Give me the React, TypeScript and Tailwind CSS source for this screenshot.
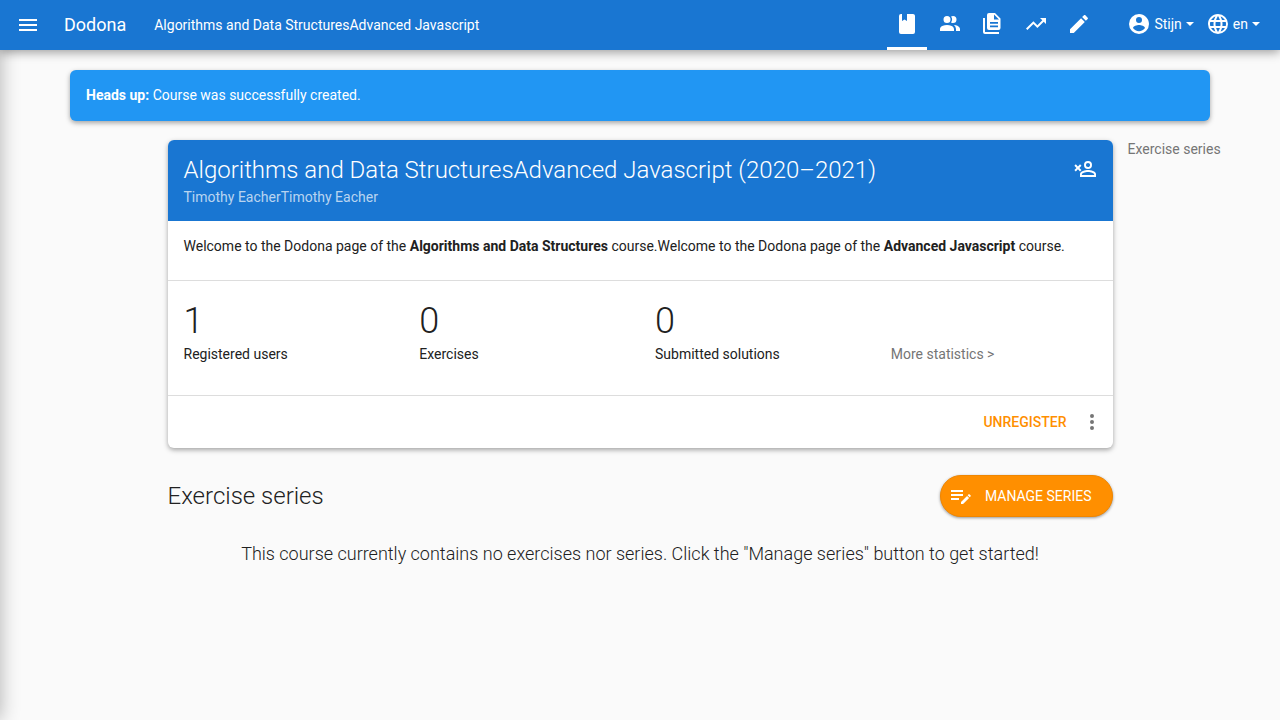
import React from "react";

function Icon({ d, className = "" }: { d: string; className?: string }) {
  return (
    <svg viewBox="0 0 24 24" aria-hidden="true" className={`size-6 shrink-0 fill-current ${className}`}>
      <path d={d} />
    </svg>
  );
}

const icons = {
  menu: "M3,6H21V8H3V6M3,11H21V13H3V11M3,16H21V18H3V16Z",
  book: "M18,22A2,2 0 0,0 20,20V4C20,2.89 19.1,2 18,2H12V9L9.5,7.5L7,9V2H6A2,2 0 0,0 4,4V20A2,2 0 0,0 6,22H18Z",
  users: "M16 17V19H2V17S2 13 9 13 16 17 16 17M12.5 7.5A3.5 3.5 0 1 0 9 11A3.5 3.5 0 0 0 12.5 7.5M15.94 13A5.32 5.32 0 0 1 18 17V19H22V17S22 13.37 15.94 13M15 4A3.39 3.39 0 0 0 13.07 4.59A5 5 0 0 1 13.07 10.41A3.39 3.39 0 0 0 15 11A3.5 3.5 0 0 0 15 4Z",
  documents: "M2,6V20A2,2 0 0,0 4,22H18V20H4V6H2M8,1A2,2 0 0,0 6,3V16A2,2 0 0,0 8,18H17.5A2,2 0 0,0 19.5,16V6.5L14,1H8M13,2.5L18,7.5H13V2.5M9,10V11.7H17V10H9M9,13.6V15.3H17V13.6H9Z",
  trend: "M16,6L18.29,8.29L13.41,13.17L9.41,9.17L2,16.59L3.41,18L9.41,12L13.41,16L19.71,9.71L22,12V6H16Z",
  pencil: "M20.71,7.04C21.1,6.65 21.1,6 20.71,5.63L18.37,3.29C18,2.9 17.35,2.9 16.96,3.29L15.12,5.12L18.87,8.87M3,17.25V21H6.75L17.81,9.93L14.06,6.18L3,17.25Z",
  account: "M12,19.2C9.5,19.2 7.29,17.92 6,16C6.03,14 10,12.9 12,12.9C14,12.9 17.97,14 18,16C16.71,17.92 14.5,19.2 12,19.2M12,5A3,3 0 0,1 15,8A3,3 0 0,1 12,11A3,3 0 0,1 9,8A3,3 0 0,1 12,5M12,2A10,10 0 0,0 2,12A10,10 0 0,0 12,22A10,10 0 0,0 22,12C22,6.47 17.5,2 12,2Z",
  web: "M16.36,14C16.44,13.34 16.5,12.68 16.5,12C16.5,11.32 16.44,10.66 16.36,10H19.74C19.9,10.64 20,11.31 20,12C20,12.69 19.9,13.36 19.74,14M14.59,19.56C15.19,18.45 15.65,17.25 15.97,16H18.92C17.96,17.65 16.43,18.93 14.59,19.56M14.34,14H9.66C9.56,13.34 9.5,12.68 9.5,12C9.5,11.32 9.56,10.65 9.66,10H14.34C14.43,10.65 14.5,11.32 14.5,12C14.5,12.68 14.43,13.34 14.34,14M12,19.96C11.17,18.76 10.5,17.43 10.09,16H13.91C13.5,17.43 12.83,18.76 12,19.96M8,8H5.08C6.03,6.34 7.57,5.06 9.4,4.44C8.8,5.55 8.35,6.75 8,8M5.08,16H8C8.35,17.25 8.8,18.45 9.4,19.56C7.57,18.93 6.03,17.65 5.08,16M4.26,14C4.1,13.36 4,12.69 4,12C4,11.31 4.1,10.64 4.26,10H7.64C7.56,10.66 7.5,11.32 7.5,12C7.5,12.68 7.56,13.34 7.64,14M12,4.03C12.83,5.23 13.5,6.57 13.91,8H10.09C10.5,6.57 11.17,5.23 12,4.03M18.92,8H15.97C15.65,6.75 15.19,5.55 14.59,4.44C16.43,5.07 17.96,6.34 18.92,8M12,2C6.47,2 2,6.5 2,12A10,10 0 0,0 12,22A10,10 0 0,0 22,12A10,10 0 0,0 12,2Z",
  unregister: "M15,4A4,4 0 0,0 11,8A4,4 0 0,0 15,12A4,4 0 0,0 19,8A4,4 0 0,0 15,4M15,5.9C16.16,5.9 17.1,6.84 17.1,8C17.1,9.16 16.16,10.1 15,10.1A2.1,2.1 0 0,1 12.9,8A2.1,2.1 0 0,1 15,5.9M15,13C12.33,13 7,14.33 7,17V20H23V17C23,14.33 17.67,13 15,13M15,14.9C17.97,14.9 21.1,16.36 21.1,17V18.1H8.9V17C8.9,16.36 12,14.9 15,14.9M4.92,9.46L2.8,7.34L1.39,8.76L3.51,10.88L1.39,13L2.8,14.41L4.92,12.29L7.04,14.41L8.46,13L6.34,10.88L8.46,8.76L7.04,7.34L4.92,9.46Z",
  dots: "M12,16A2,2 0 0,1 14,18A2,2 0 0,1 12,20A2,2 0 0,1 10,18A2,2 0 0,1 12,16M12,10A2,2 0 0,1 14,12A2,2 0 0,1 12,14A2,2 0 0,1 10,12A2,2 0 0,1 12,10M12,4A2,2 0 0,1 14,6A2,2 0 0,1 12,8A2,2 0 0,1 10,6A2,2 0 0,1 12,4Z",
  playlistEdit: "M2,6V8H14V6H2M2,10V12H14V10H2M20.04,10.13C19.9,10.13 19.76,10.19 19.65,10.3L18.65,11.3L20.7,13.35L21.7,12.35C21.92,12.14 21.92,11.79 21.7,11.58L20.42,10.3C20.31,10.19 20.18,10.13 20.04,10.13M18.07,11.88L12,17.94V20H14.06L20.12,13.93L18.07,11.88M2,14V16H10V14H2Z",
};

const navItems = [
  { label: "Course", icon: icons.book, active: true },
  { label: "Users", icon: icons.users },
  { label: "Submissions", icon: icons.documents },
  { label: "Progress", icon: icons.trend },
  { label: "Edit", icon: icons.pencil },
];

const stats = [
  { value: "1", label: "Registered users" },
  { value: "0", label: "Exercises" },
  { value: "0", label: "Submitted solutions" },
];

function Caret() {
  return <span className="ml-1 border-x-4 border-t-4 border-x-transparent border-t-current" />;
}

function NavBar() {
  return (
    <header className="relative z-10 flex h-[50px] items-center bg-[#1976d2] pr-5 pl-4 text-white shadow-[0_2px_10px_rgba(0,0,0,0.4)]">
      <button aria-label="Menu" className="mr-6">
        <Icon d={icons.menu} />
      </button>
      <a href="#" className="mr-7 text-lg">Dodona</a>
      <a href="#">Algorithms and Data StructuresAdvanced Javascript</a>
      <nav className="mr-7 ml-auto flex h-full gap-[3px]">
        {navItems.map((item) => (
          <a
            key={item.label}
            href="#"
            aria-label={item.label}
            className={`flex w-10 items-center justify-center border-b-3 ${item.active ? "border-white" : "border-transparent"}`}
          >
            <Icon d={item.icon} className={item.icon === icons.documents ? "[fill-rule:evenodd]" : ""} />
          </a>
        ))}
      </nav>
      <div className="flex gap-3 pb-0.5">
        <button className="flex items-center">
          <Icon d={icons.account} className="mr-[3px]" />
          Stijn
          <Caret />
        </button>
        <button className="flex items-center">
          <Icon d={icons.web} className="mr-[3px]" />
          en
          <Caret />
        </button>
      </div>
    </header>
  );
}

function CourseCard() {
  return (
    <section className="overflow-hidden rounded-md bg-white shadow-[0_2px_5px_rgba(0,0,0,0.35)]">
      <div className="flex justify-between bg-[#1976d2] px-4 pt-4 pb-3 text-white">
        <div>
          <h1 className="text-2xl leading-7 font-light">
            Algorithms and Data StructuresAdvanced Javascript (2020–2021)
          </h1>
          <p className="mt-[3px] mb-px leading-[21px] text-white/70">Timothy EacherTimothy Eacher</p>
        </div>
        <Icon d={icons.unregister} className="mt-px" />
      </div>
      <p className="border-b border-[#ddd] px-4 pt-[15px] pb-6 leading-5">
        Welcome to the Dodona page of the <b>Algorithms and Data Structures</b> course.Welcome to the Dodona page of the{" "}
        <b>Advanced Javascript</b> course.
      </p>
      <div className="border-b border-[#ddd] px-4 pt-5 pb-[31px]">
        <div className="-mx-[15px] grid grid-cols-4 items-end">
          {stats.map((s) => (
            <div key={s.label} className="px-[15px]">
              <div className="text-4xl leading-10 font-light">{s.value}</div>
              <div className="mt-[3px] leading-5">{s.label}</div>
            </div>
          ))}
          <a href="#" className="px-[15px] leading-5 text-[#757575]">More statistics &gt;</a>
        </div>
      </div>
      <div className="flex h-[52px] items-center justify-end gap-[13px] pr-[9px]">
        <button className="font-medium text-[#ff8f00] uppercase">Unregister</button>
        <button aria-label="More actions" className="text-[#757575]">
          <Icon d={icons.dots} />
        </button>
      </div>
    </section>
  );
}

export default function App() {
  return (
    <div className="relative min-h-screen bg-[#fafafa] font-[Roboto,sans-serif] text-sm text-[#212121]">
      <div className="pointer-events-none absolute inset-y-0 right-full w-10 shadow-[0_0_20px_rgba(0,0,0,0.3)]" />
      <NavBar />
      <main className="mx-auto max-w-[1170px] px-[15px] pt-5">
        <div role="alert" className="mb-[19px] rounded-md bg-[#2196f3] px-4 py-[15px] leading-[21px] text-white shadow-[0_2px_5px_rgba(0,0,0,0.35)]">
          <b>Heads up:</b> Course was successfully created.
        </div>
        <div className="-mx-[15px] grid grid-cols-12">
          <div className="col-span-10 col-start-2 px-[15px]">
            <CourseCard />
            <div className="mt-[27px] flex items-center justify-between">
              <h2 className="text-2xl font-light">Exercise series</h2>
              <a
                href="#"
                className="flex h-[42px] items-center gap-3 rounded-full border border-[#f08600] bg-[#ff8f00] pr-5 pl-2 text-white uppercase shadow-[0_1px_3px_rgba(0,0,0,0.4)]"
              >
                <Icon d={icons.playlistEdit} />
                Manage series
              </a>
            </div>
            <p className="mt-[23px] text-center text-lg font-light">
              This course currently contains no exercises nor series. Click the "Manage series" button to get started!
            </p>
          </div>
          <nav className="leading-[19px] whitespace-nowrap">
            <a href="#" className="text-[#757575]">Exercise series</a>
          </nav>
        </div>
      </main>
    </div>
  );
}
